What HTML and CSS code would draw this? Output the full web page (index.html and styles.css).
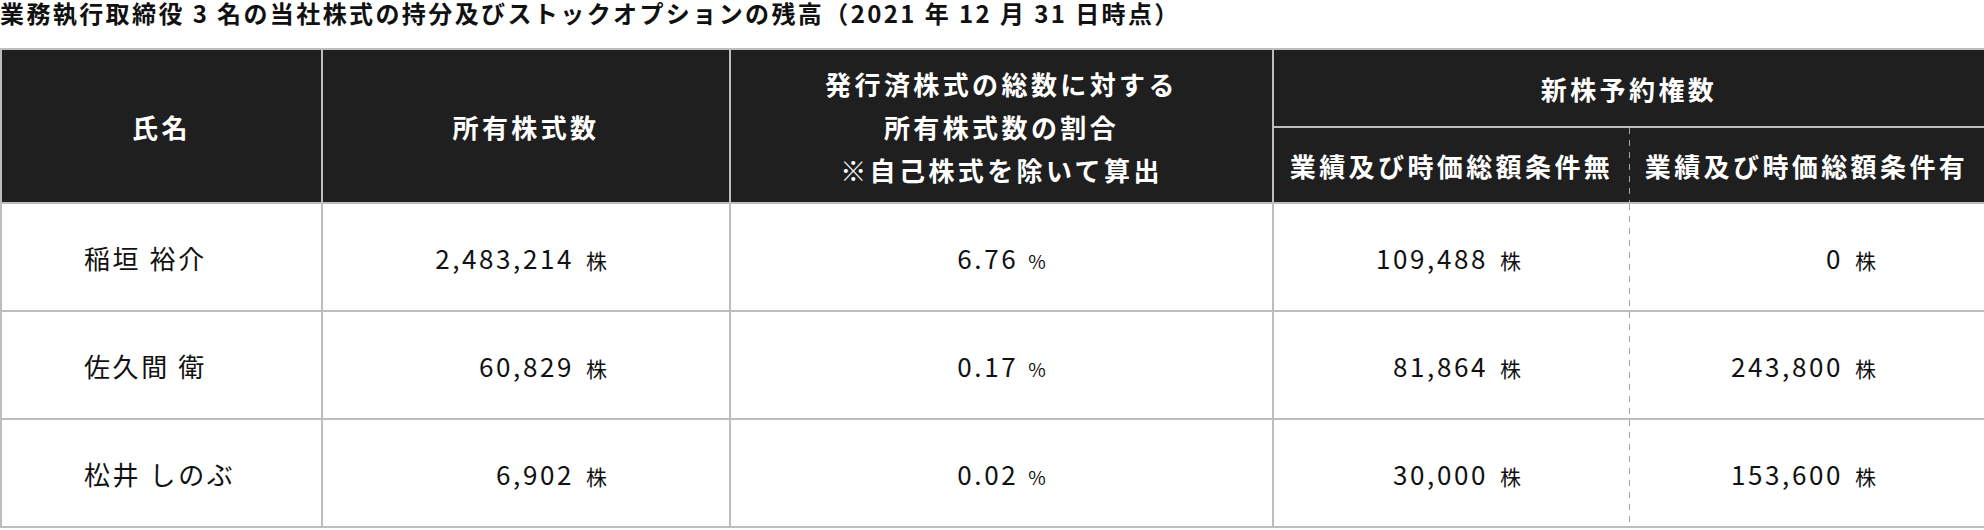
FILE: index.html
```html
<!DOCTYPE html>
<html lang="ja">
<head>
<meta charset="utf-8">
<link rel="stylesheet" href="styles.css">
</head>
<body>
<h1 class="title">業務執行取締役 3 名の当社株式の持分及びストックオプションの残高（2021 年 12 月 31 日時点）</h1>
<table class="holdings">
  <colgroup>
    <col class="c-name">
    <col class="c-shares">
    <col class="c-ratio">
    <col class="c-opt">
    <col class="c-opt2">
  </colgroup>
  <thead>
    <tr class="h-top">
      <th rowspan="2">氏名</th>
      <th rowspan="2">所有株式数</th>
      <th rowspan="2" class="multi">発行済株式の総数に対する<br>所有株式数の割合<br>※自己株式を除いて算出</th>
      <th colspan="2">新株予約権数</th>
    </tr>
    <tr class="h-sub">
      <th class="sub-l">業績及び時価総額条件無</th>
      <th class="sub-r">業績及び時価総額条件有</th>
    </tr>
  </thead>
  <tbody>
    <tr>
      <td class="name">稲垣 裕介</td>
      <td class="num num-shares">2,483,214<span class="unit">株</span></td>
      <td class="pct">6.76<span class="unit pc">%</span></td>
      <td class="num sub-l">109,488<span class="unit">株</span></td>
      <td class="num sub-r">0<span class="unit">株</span></td>
    </tr>
    <tr>
      <td class="name">佐久間 衛</td>
      <td class="num num-shares">60,829<span class="unit">株</span></td>
      <td class="pct">0.17<span class="unit pc">%</span></td>
      <td class="num sub-l">81,864<span class="unit">株</span></td>
      <td class="num sub-r">243,800<span class="unit">株</span></td>
    </tr>
    <tr>
      <td class="name">松井 しのぶ</td>
      <td class="num num-shares">6,902<span class="unit">株</span></td>
      <td class="pct">0.02<span class="unit pc">%</span></td>
      <td class="num sub-l">30,000<span class="unit">株</span></td>
      <td class="num sub-r">153,600<span class="unit">株</span></td>
    </tr>
  </tbody>
</table>
</body>
</html>
```
FILE: styles.css
```css
html, body {
  margin: 0;
  padding: 0;
  background: #ffffff;
}
body {
  font-family: "Noto Sans CJK JP", "Noto Sans", sans-serif;
  color: #111111;
  width: 1984px;
  overflow: hidden;
}
.title {
  margin: 0;
  padding-top: 0;
  font-size: 24px;
  line-height: 26px;
  font-weight: 700;
  letter-spacing: 2.4px;
  color: #111111;
  height: 48px;
  white-space: nowrap;
}
.holdings {
  width: 1984px;
  border-collapse: collapse;
  table-layout: fixed;
}
.c-name { width: 321px; }
.c-shares { width: 408px; }
.c-ratio { width: 543px; }
.c-opt { width: 356px; }
.c-opt2 { width: 356px; }
.holdings th,
.holdings td {
  border: 2px solid #bdbdbd;
  padding: 0;
}
.holdings th {
  background-color: #1f1f1f;
  color: #ffffff;
  font-size: 26px;
  font-weight: 700;
  letter-spacing: 3.4px;
  text-align: center;
  vertical-align: middle;
  line-height: 43px;
}
.h-top { height: 78px; }
.h-sub { height: 76px; }
.holdings .sub-l { border-right: none; }
.holdings .sub-r {
  border-left: none;
  background-image: repeating-linear-gradient(to bottom, #a6a6a6 0, #a6a6a6 6px, transparent 6px, transparent 12px);
  background-size: 1px 100%;
  background-repeat: no-repeat;
  background-position: left top;
}
.holdings tbody tr { height: 108px; }
.holdings td {
  font-size: 26px;
  font-weight: 400;
  letter-spacing: 2.6px;
  vertical-align: middle;
  color: #111111;
}
.name {
  text-align: left;
  padding-left: 82px !important;
}
.num {
  text-align: right;
  padding-right: 108px !important;
}
.num-shares {
  padding-right: 122px !important;
}
.pct {
  text-align: center;
}
.unit {
  font-size: 21px;
  margin-left: 12px;
  letter-spacing: 0;
}
.pc {
  font-size: 19px;
  margin-left: 10px;
}
```
